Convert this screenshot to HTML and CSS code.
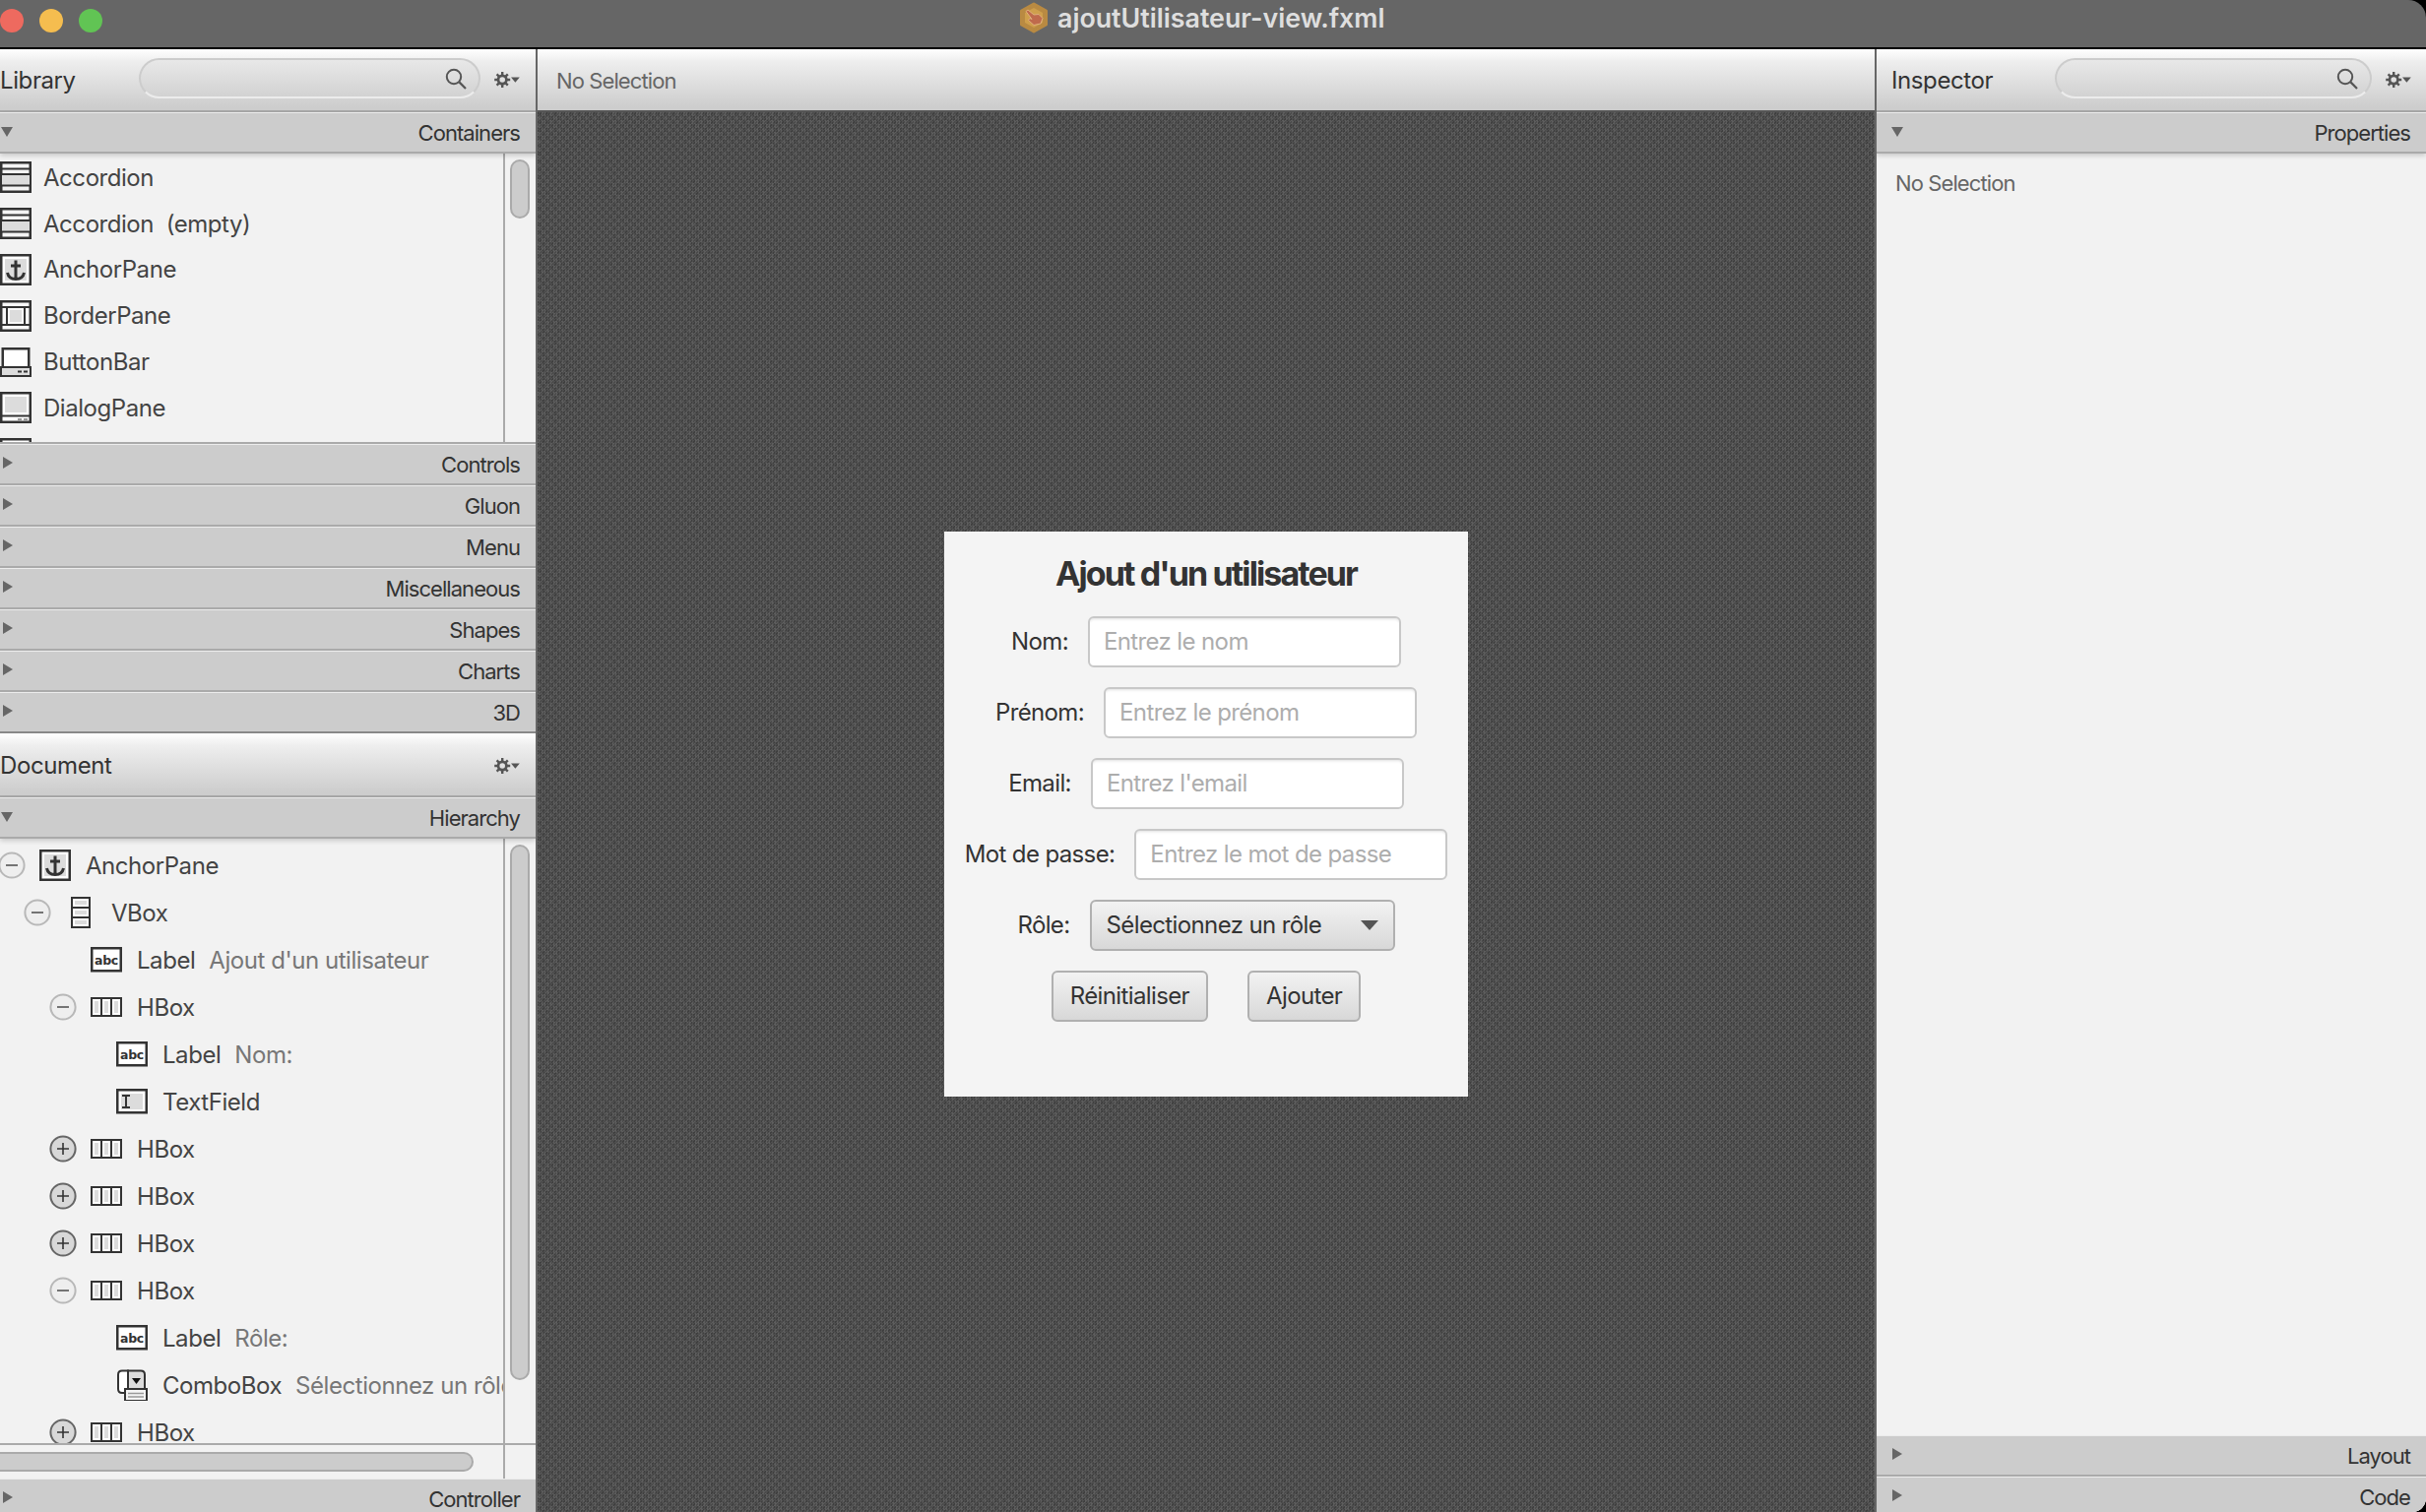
FILE: index.html
```html
<!DOCTYPE html>
<html lang="fr">
<head>
<meta charset="utf-8">
<title>ajoutUtilisateur-view.fxml</title>
<link rel="stylesheet" href="styles.css">
</head>
<body>
<svg class="defs" width="0" height="0" aria-hidden="true">
  <defs>
    <symbol id="i-accordion" viewBox="0 0 32 32">
      <rect x="1.25" y="1.25" width="29.5" height="29.5" fill="#f4f4f4" stroke="#333" stroke-width="2.5"/>
      <rect x="2" y="14" width="28" height="10" fill="#dcdcdc"/>
      <path d="M1 7.5H31M1 13H31M1 24.5H31" stroke="#333" stroke-width="2" fill="none"/>
    </symbol>
    <symbol id="i-anchor" viewBox="0 0 32 32">
      <rect x="1.25" y="1.25" width="29.5" height="29.5" fill="#fff" stroke="#333" stroke-width="2.5"/>
      <rect x="5" y="5" width="22" height="22" fill="#dcdcdc"/>
      <path d="M16 6.5V25M11 12H21M7.5 19C8.5 24 12 25.5 16 25.5S23.5 24 24.5 19" stroke="#333" stroke-width="3" fill="none"/>
    </symbol>
    <symbol id="i-border" viewBox="0 0 32 32">
      <rect x="1.25" y="1.25" width="29.5" height="29.5" fill="#f8f8f8" stroke="#333" stroke-width="2.5"/>
      <rect x="10" y="10" width="12" height="12" fill="#dcdcdc"/>
      <path d="M1 7H31M1 25H31M7 7V25M25 7V25" stroke="#333" stroke-width="2" fill="none"/>
    </symbol>
    <symbol id="i-buttonbar" viewBox="0 0 32 32">
      <rect x="2.75" y="2.25" width="26.5" height="22" fill="#fff" stroke="#333" stroke-width="2.5"/>
      <rect x="1" y="21" width="30" height="9" fill="#dcdcdc" stroke="#333" stroke-width="2"/>
      <path d="M18 25.5H22M24 25.5H28" stroke="#333" stroke-width="2" fill="none"/>
    </symbol>
    <symbol id="i-dialog" viewBox="0 0 32 32">
      <rect x="1.25" y="1.25" width="29.5" height="29.5" fill="#fff" stroke="#333" stroke-width="2.5"/>
      <rect x="5" y="5" width="22" height="16" fill="#dcdcdc"/>
      <path d="M1 24.5H31" stroke="#333" stroke-width="2" fill="none"/>
      <path d="M18 28H22M24 28H28" stroke="#999" stroke-width="2" fill="none"/>
    </symbol>
    <symbol id="i-vbox" viewBox="0 0 32 32">
      <rect x="7" y="1" width="18" height="30" fill="#fff" stroke="#333" stroke-width="2"/>
      <path d="M7 11H25M7 21H25" stroke="#333" stroke-width="2" fill="none"/>
      <rect x="10" y="4" width="12" height="4" fill="#dcdcdc"/>
      <rect x="10" y="14" width="12" height="4" fill="#dcdcdc"/>
      <rect x="10" y="24" width="12" height="4" fill="#dcdcdc"/>
    </symbol>
    <symbol id="i-hbox" viewBox="0 0 32 32">
      <rect x="1" y="7" width="30" height="18" fill="#fff" stroke="#333" stroke-width="2"/>
      <path d="M11 7V25M21 7V25" stroke="#333" stroke-width="2" fill="none"/>
      <rect x="4" y="10" width="4" height="12" fill="#dcdcdc"/>
      <rect x="14" y="10" width="4" height="12" fill="#dcdcdc"/>
      <rect x="24" y="10" width="4" height="12" fill="#dcdcdc"/>
    </symbol>
    <symbol id="i-label" viewBox="0 0 32 32">
      <rect x="1.25" y="4.25" width="29.5" height="23" fill="#fff" stroke="#333" stroke-width="2.5"/>
      <text x="16" y="20.5" text-anchor="middle" class="abc">abc</text>
    </symbol>
    <symbol id="i-text" viewBox="0 0 32 32">
      <rect x="1.25" y="4.25" width="29.5" height="23" fill="#fff" stroke="#333" stroke-width="2.5"/>
      <rect x="5" y="8" width="22" height="16" fill="#dcdcdc"/>
      <path d="M6 10H14M6 22H14M10 10V22" stroke="#333" stroke-width="2" fill="none"/>
    </symbol>
    <symbol id="i-combo" viewBox="0 0 32 32">
      <path d="M12 1.5H6Q2 1.5 2 5.5V20Q2 24 6 24H12Z" fill="#fff" stroke="#333" stroke-width="2"/>
      <path d="M12 1.5H25Q29 1.5 29 5.5V24H12Z" fill="#dcdcdc" stroke="#333" stroke-width="2"/>
      <path d="M16 9H25L20.5 15Z" fill="#111"/>
      <rect x="9" y="20" width="22" height="12" fill="#f4f4f4" stroke="#333" stroke-width="2"/>
      <path d="M12 24.5H28M12 28H28" stroke="#999" stroke-width="1.6" fill="none"/>
    </symbol>
    <symbol id="i-gear" viewBox="0 0 32 20">
      <circle cx="10" cy="10" r="5.2" fill="none" stroke="#555" stroke-width="3.4"/>
      <path d="M10 0V4M10 16V20M0 10H4M16 10H20M3 3L5.8 5.8M14.2 14.2L17 17M17 3L14.2 5.8M5.8 14.2L3 17" stroke="#555" stroke-width="3" fill="none"/>
      <path d="M21 7H32L26.5 13.5Z" fill="#555"/>
    </symbol>
    <symbol id="i-search" viewBox="0 0 22 22">
      <circle cx="9" cy="9" r="7.2" fill="none" stroke="#555" stroke-width="2"/>
      <path d="M14.4 14.4L21 21" stroke="#555" stroke-width="2.2" fill="none"/>
    </symbol>
    <symbol id="i-down" viewBox="0 0 12 10"><path d="M0 0H12L6 10Z" fill="#666"/></symbol>
    <symbol id="i-right" viewBox="0 0 10 12"><path d="M0 0L10 6L0 12Z" fill="#666"/></symbol>
    <symbol id="i-minus" viewBox="0 0 28 28">
      <circle cx="14" cy="14" r="12.6" fill="#eee" stroke="#b8b8b8" stroke-width="2"/>
      <path d="M8 14H20" stroke="#555" stroke-width="1.6"/>
    </symbol>
    <symbol id="i-plus" viewBox="0 0 28 28">
      <circle cx="14" cy="14" r="12.6" fill="#d8d8d8" stroke="#666" stroke-width="2"/>
      <path d="M8 14H20M14 8V20" stroke="#333" stroke-width="1.6"/>
    </symbol>
  </defs>
</svg>

<div class="window">
  <header class="titlebar">
    <div class="lights">
      <span class="light red"></span><span class="light yellow"></span><span class="light green"></span>
    </div>
    <div class="doc-title">
      <svg class="app-icon" viewBox="0 0 32 32">
        <path d="M16 2L28.5 9V23L16 30L3.5 23V9Z" fill="#b98a42" stroke="#b98a42" stroke-width="3" stroke-linejoin="round"/>
        <path d="M16 6L25 11V21L16 26L7 21V11Z" fill="#cf9f4c"/>
        <path d="M8 9.5L10 8L16 13L21 12.5L25 16.5L23 22L16 23.5L10.5 18.5L12 16.5L14 17.5Z" fill="#bf6a4c" stroke="#dfb07e" stroke-width="1" stroke-linejoin="round"/>
      </svg>
      <span>ajoutUtilisateur-view.fxml</span>
    </div>
  </header>

  <main class="workspace">
    <aside class="left">
      <div class="toolbar">
        <span class="tool-title">Library</span>
        <div class="search"><svg class="search-ico"><use href="#i-search"/></svg></div>
        <svg class="gear"><use href="#i-gear"/></svg>
      </div>
      <div class="pane-head shadowed"><svg class="arrow-d"><use href="#i-down"/></svg><span>Containers</span></div>
      <div class="library">
        <div class="lib-list">
          <div class="lib-row"><svg class="ic"><use href="#i-accordion"/></svg><span>Accordion</span></div>
          <div class="lib-row"><svg class="ic"><use href="#i-accordion"/></svg><span class="pre">Accordion  (empty)</span></div>
          <div class="lib-row"><svg class="ic"><use href="#i-anchor"/></svg><span>AnchorPane</span></div>
          <div class="lib-row"><svg class="ic"><use href="#i-border"/></svg><span>BorderPane</span></div>
          <div class="lib-row"><svg class="ic"><use href="#i-buttonbar"/></svg><span>ButtonBar</span></div>
          <div class="lib-row"><svg class="ic"><use href="#i-dialog"/></svg><span>DialogPane</span></div>
          <div class="lib-row"><svg class="ic"><use href="#i-dialog"/></svg></div>
        </div>
        <div class="vscroll"><div class="thumb lib-thumb"></div></div>
      </div>
      <div class="pane-head"><svg class="arrow-r"><use href="#i-right"/></svg><span>Controls</span></div>
      <div class="pane-head"><svg class="arrow-r"><use href="#i-right"/></svg><span>Gluon</span></div>
      <div class="pane-head"><svg class="arrow-r"><use href="#i-right"/></svg><span>Menu</span></div>
      <div class="pane-head"><svg class="arrow-r"><use href="#i-right"/></svg><span>Miscellaneous</span></div>
      <div class="pane-head"><svg class="arrow-r"><use href="#i-right"/></svg><span>Shapes</span></div>
      <div class="pane-head"><svg class="arrow-r"><use href="#i-right"/></svg><span>Charts</span></div>
      <div class="pane-head last"><svg class="arrow-r"><use href="#i-right"/></svg><span>3D</span></div>

      <div class="toolbar doc-bar">
        <span class="tool-title">Document</span>
        <svg class="gear"><use href="#i-gear"/></svg>
      </div>
      <div class="pane-head shadowed"><svg class="arrow-d"><use href="#i-down"/></svg><span>Hierarchy</span></div>
      <div class="hierarchy">
        <div class="tree">
          <div class="node l0"><svg class="exp"><use href="#i-minus"/></svg><svg class="ic"><use href="#i-anchor"/></svg><span>AnchorPane</span></div>
          <div class="node l1"><svg class="exp"><use href="#i-minus"/></svg><svg class="ic"><use href="#i-vbox"/></svg><span>VBox</span></div>
          <div class="node l2"><span class="exp"></span><svg class="ic"><use href="#i-label"/></svg><span>Label</span><span class="val">Ajout d'un utilisateur</span></div>
          <div class="node l2"><svg class="exp"><use href="#i-minus"/></svg><svg class="ic"><use href="#i-hbox"/></svg><span>HBox</span></div>
          <div class="node l3"><span class="exp"></span><svg class="ic"><use href="#i-label"/></svg><span>Label</span><span class="val">Nom:</span></div>
          <div class="node l3"><span class="exp"></span><svg class="ic"><use href="#i-text"/></svg><span>TextField</span></div>
          <div class="node l2"><svg class="exp"><use href="#i-plus"/></svg><svg class="ic"><use href="#i-hbox"/></svg><span>HBox</span></div>
          <div class="node l2"><svg class="exp"><use href="#i-plus"/></svg><svg class="ic"><use href="#i-hbox"/></svg><span>HBox</span></div>
          <div class="node l2"><svg class="exp"><use href="#i-plus"/></svg><svg class="ic"><use href="#i-hbox"/></svg><span>HBox</span></div>
          <div class="node l2"><svg class="exp"><use href="#i-minus"/></svg><svg class="ic"><use href="#i-hbox"/></svg><span>HBox</span></div>
          <div class="node l3"><span class="exp"></span><svg class="ic"><use href="#i-label"/></svg><span>Label</span><span class="val">Rôle:</span></div>
          <div class="node l3"><span class="exp"></span><svg class="ic"><use href="#i-combo"/></svg><span>ComboBox</span><span class="val">Sélectionnez un rôle</span></div>
          <div class="node l2"><svg class="exp"><use href="#i-plus"/></svg><svg class="ic"><use href="#i-hbox"/></svg><span>HBox</span></div>
        </div>
        <div class="vscroll"><div class="thumb tree-thumb"></div></div>
      </div>
      <div class="hbar">
        <div class="htrack"><div class="hthumb"></div></div>
        <div class="hcorner"></div>
      </div>
      <div class="pane-head"><svg class="arrow-r"><use href="#i-right"/></svg><span>Controller</span></div>
    </aside>

    <section class="center">
      <div class="toolbar center-bar"><span class="no-sel">No Selection</span></div>
      <div class="canvas">
        <form class="card">
          <h1 class="form-title">Ajout d'un utilisateur</h1>
          <div class="frow"><span class="flabel">Nom:</span><div class="field">Entrez le nom</div></div>
          <div class="frow"><span class="flabel">Prénom:</span><div class="field">Entrez le prénom</div></div>
          <div class="frow"><span class="flabel">Email:</span><div class="field">Entrez l'email</div></div>
          <div class="frow"><span class="flabel">Mot de passe:</span><div class="field">Entrez le mot de passe</div></div>
          <div class="frow"><span class="flabel">Rôle:</span><div class="combo"><span>Sélectionnez un rôle</span><i class="caret"></i></div></div>
          <div class="frow btns"><div class="btn">Réinitialiser</div><div class="btn">Ajouter</div></div>
        </form>
      </div>
    </section>

    <aside class="right">
      <div class="toolbar right-bar">
        <span class="tool-title">Inspector</span>
        <div class="search"><svg class="search-ico"><use href="#i-search"/></svg></div>
        <svg class="gear"><use href="#i-gear"/></svg>
      </div>
      <div class="pane-head shadowed"><svg class="arrow-d"><use href="#i-down"/></svg><span>Properties</span></div>
      <div class="inspector"><span class="no-sel">No Selection</span></div>
      <div class="pane-head"><svg class="arrow-r"><use href="#i-right"/></svg><span>Layout</span></div>
      <div class="pane-head"><svg class="arrow-r"><use href="#i-right"/></svg><span>Code</span></div>
    </aside>
  </main>
</div>
</body>
</html>
```

FILE: styles.css
```css
* { box-sizing: border-box; }
html, body { margin: 0; padding: 0; width: 2464px; height: 1536px; overflow: hidden; background: #000; }
body { font-family: Inter, "Open Sans", "Liberation Sans", sans-serif; color: #333; }
.defs { position: absolute; }
.abc { font: bold 12.5px "DejaVu Sans", sans-serif; fill: #333; letter-spacing: -0.2px; }

.window { width: 2464px; height: 1536px; display: flex; flex-direction: column; overflow: hidden; border-bottom-right-radius: 14px; }

.titlebar { height: 50px; flex: none; background: #666; border-bottom: 2px solid #000; border-top-right-radius: 18px; display: flex; align-items: center; position: relative; }
.lights { display: flex; gap: 16px; margin-top: -6px; }
.light { width: 24px; height: 24px; border-radius: 50%; }
.red { background: #ee6a5f; }
.yellow { background: #f5bd4f; }
.green { background: #61c454; }
.doc-title { position: absolute; left: 1034px; top: 2px; display: flex; align-items: center; gap: 8px; color: #dedede; font-weight: 600; font-size: 26.8px; line-height: 32px; }
.app-icon { width: 32px; height: 32px; }

.workspace { flex: 1; min-height: 0; display: grid; grid-template-columns: 544px 1360px 560px; background: #f2f2f2; }
.left, .right { display: flex; flex-direction: column; min-height: 0; overflow: hidden; background: #f2f2f2; }
.left { height: 1486px; }
.right { height: 1486px; border-left: 2px solid #666; }

.toolbar { height: 64px; flex: none; display: flex; align-items: center; background: linear-gradient(#fff, #eee 20%, #cdcdcd 95%); border-bottom: 2px solid #aaa; }
.tool-title { font-size: 24px; color: #333; letter-spacing: -0.4px; width: 141px; flex: none; }
.search { width: 347px; height: 41px; flex: none; border-radius: 21px; background: linear-gradient(#e8e8e8, #d2d2d2); border: 2px solid #ccc; border-bottom-color: #ececec; margin-top: -3px; display: flex; align-items: center; justify-content: flex-end; padding-right: 12px; }
.search-ico { width: 22px; height: 22px; }
.gear { width: 26px; height: 16px; margin-left: 14px; flex: none; }
.doc-bar { height: 65px; justify-content: space-between; padding: 2px 16px 0 0; }
.doc-bar .tool-title { width: auto; }
.right-bar .tool-title { width: 181px; padding-left: 15px; }
.right-bar .search { width: 322px; }

.pane-head { height: 42px; flex: none; display: flex; align-items: center; justify-content: space-between; background: #ccc; border-top: 1px solid #ececec; border-bottom: 2px solid #aaa; padding-right: 16px; font-size: 22px; color: #333; letter-spacing: -0.95px; position: relative; }
.pane-head.shadowed { box-shadow: 0 2px 5px rgba(0, 0, 0, .18); z-index: 1; }
.pane-head.last { border-bottom: 2px solid #888; }
.arrow-d { width: 12px; height: 10px; margin-left: 1px; margin-top: -2px; }
.arrow-r { width: 10px; height: 12px; margin-left: 3px; margin-top: -4px; }
.right .arrow-d { margin-left: 15px; }
.right .arrow-r { margin-left: 16px; }

.library { height: 295px; flex: none; display: flex; overflow: hidden; border-bottom: 2px solid #aaa; }
.lib-list { flex: 1; min-width: 0; overflow: hidden; padding-top: 1px; }
.lib-row { height: 46.8px; display: flex; align-items: center; gap: 12px; font-size: 24px; color: #444; letter-spacing: -0.45px; white-space: nowrap; }
.pre { white-space: pre; }
.ic { width: 32px; height: 32px; flex: none; }

.vscroll { width: 33px; flex: none; border-left: 2px solid #aaa; padding: 6px 6px 0 5px; height: 100%; }
.thumb { width: 20px; background: #ccc; border: 2px solid #aaa; border-radius: 10px; }
.lib-thumb { height: 60px; }
.tree-thumb { height: 544px; }

.hierarchy { flex: none; height: 614px; display: flex; overflow: hidden; }
.tree { flex: 1; min-width: 0; overflow: hidden; padding-top: 3px; }
.node { height: 48px; display: flex; align-items: center; font-size: 24px; color: #444; letter-spacing: -0.45px; white-space: nowrap; overflow: hidden; }
.exp { width: 28px; height: 28px; flex: none; margin-left: -2px; margin-right: 14px; }
.node .ic { margin-right: 15px; }
.l1 { padding-left: 26px; }
.l2 { padding-left: 52px; }
.l3 { padding-left: 78px; }
.val { color: #777; margin-left: 14px; }

.hbar { height: 36px; flex: none; display: flex; border-top: 2px solid #aaa; }
.htrack { flex: none; width: 511px; padding-top: 7px; }
.hthumb { width: 481px; height: 20px; background: #ccc; border: 2px solid #aaa; border-left: 0; border-radius: 0 10px 10px 0; }
.hcorner { flex: 1; border-left: 2px solid #aaa; }

.center { display: flex; flex-direction: column; min-height: 0; height: 1486px; border-left: 2px solid #666; }
.center-bar { padding-left: 19px; border-bottom: 2px solid #555; }
.no-sel { font-size: 22px; color: #666; letter-spacing: -0.9px; }
.center-bar .no-sel { margin-top: 2px; }
.canvas { flex: 1; display: flex; align-items: center; justify-content: center; background-color: #4c4c4c; background-image: repeating-conic-gradient(rgba(255, 255, 255, .05) 0 25%, rgba(0, 0, 0, .1) 0 50%), repeating-conic-gradient(#545454 0 25%, #464646 0 50%); background-size: 3px 3px, 8px 8px; padding-top: 3px; }

.card { width: 532px; height: 574px; background: #f4f4f4; display: flex; flex-direction: column; align-items: center; gap: 20px; padding-top: 20px; }
.form-title { margin: 0; height: 46px; line-height: 46px; font-size: 34px; font-weight: 700; color: #333; letter-spacing: -1.9px; white-space: nowrap; }
.frow { height: 52px; display: flex; align-items: center; gap: 20px; font-size: 24px; color: #333; letter-spacing: -0.62px; white-space: nowrap; }
.btns { gap: 40px; }
.field { width: 318px; height: 52px; background: #fff; border: 2px solid #c8c8c8; border-radius: 6px; box-shadow: inset 0 3px 3px -2px rgba(0, 0, 0, .12); padding-left: 14px; display: flex; align-items: center; color: #adadad; }
.combo { width: 310px; height: 52px; background: linear-gradient(#f2f2f2, #d8d8d8); border: 2px solid #b0b0b0; border-radius: 6px; padding: 0 15px; display: flex; align-items: center; justify-content: space-between; }
.caret { width: 0; height: 0; border-left: 9px solid transparent; border-right: 9px solid transparent; border-top: 10px solid #555; }
.btn { height: 52px; padding: 0 17px; background: linear-gradient(#f2f2f2, #d8d8d8); border: 2px solid #b0b0b0; border-radius: 6px; display: flex; align-items: center; }

.inspector { flex: none; height: 1302px; padding: 17px 0 0 19px; }
```
